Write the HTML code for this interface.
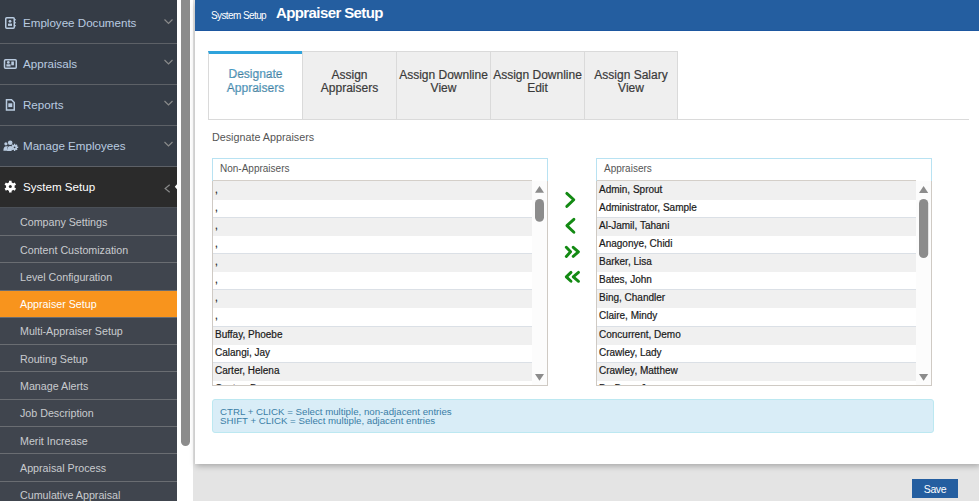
<!DOCTYPE html>
<html><head><meta charset="utf-8">
<style>
*{box-sizing:border-box;margin:0;padding:0}
html,body{width:979px;height:501px;overflow:hidden;background:#e4e4e4;font-family:"Liberation Sans",sans-serif}
#side{position:absolute;left:0;top:0;width:177px;height:501px;background:#353c46;overflow:hidden}
.top{position:absolute;left:0;width:177px;height:41px;border-bottom:1px solid #5d6167;color:#b9cbe0;font-size:11.6px}
.top .t{position:absolute;left:23px;top:13px;white-space:nowrap}
.top svg{position:absolute}
.chev{position:absolute;left:163px;top:19px}
.act{background:#2b2b2b;color:#fff}
.sub{position:absolute;left:0;width:177px;height:27.3px;border-bottom:1px solid #6a6d72;background:#40454e;color:#c9cbce;font-size:10.7px}
.sub .t{position:absolute;left:20px;top:7.5px;white-space:nowrap}
.sub.on{background:#f8941d;color:#fff}
#subbg{position:absolute;left:0;top:207px;width:177px;height:294px;background:#40454e;border-top:1px solid #4b5057}
#strip{position:absolute;left:177px;top:0;width:16px;height:501px;background:#fff}
#thumb{position:absolute;left:181px;top:-6px;width:9px;height:452px;background:#8c8c8c;border-radius:5px}
#panel{position:absolute;left:195px;top:0;width:786px;height:464px;background:#fff;box-shadow:0 3px 6px -1px rgba(0,0,0,.28)}
#hdr{position:absolute;left:0;top:0;width:786px;height:31px;background:#245ea0;border-bottom:1px solid #1d57a0;color:#fff}
#hdr .s{position:absolute;left:16px;top:10px;font-size:10px;letter-spacing:-0.6px;white-space:nowrap}
#hdr .b{position:absolute;left:81px;top:4px;font-size:15px;font-weight:bold;letter-spacing:-0.6px;white-space:nowrap}
.tab{position:absolute;top:51px;height:68px;background:#efefef;border:1px solid #dadada;border-bottom:none;color:#3a3a3a;-webkit-text-stroke:0.2px #3a3a3a;font-size:12px;text-align:center;line-height:14px}
.tab .t{position:absolute;left:0;right:0;top:17px;line-height:13px}
.tab.on{background:#fff;border-top:3px solid #2ea3dc;color:#56b4e4}
.tab.on .t{top:13px;line-height:14px}
#tabline{position:absolute;left:13px;top:119px;width:761px;height:1px;background:#dadada}
#h2{position:absolute;left:17px;top:131px;font-size:10.75px;color:#555;white-space:nowrap}
.box{position:absolute;top:158px;width:336px;height:228px;border:1px solid #cfcac4;background:#fff}
.box .hd{position:absolute;left:-1px;top:-1px;width:336px;height:23px;border:1px solid #b8e2f2;border-bottom:none;background:#fff;color:#555;font-size:10px}
.box .hd span{position:absolute;left:7px;top:4px}
.box .list{position:absolute;left:0;top:21px;width:319px;height:205px;overflow:hidden;border-top:1px solid #d4cfc9}
.row{height:18.15px;border-bottom:1px solid #dbe0e6;font-size:10px;color:#1a1a1a;-webkit-text-stroke:0.2px #1a1a1a;padding-left:2px;line-height:16px;white-space:nowrap}
.row:first-child{height:18.6px;padding-top:0.5px}
.row.g{background:#f0f0f0;border-bottom-color:#f0f0f0}
.sb{position:absolute;right:0;top:22px;width:15px;height:204px;background:#fcfcfc}
.info{position:absolute;left:17px;top:399px;width:722px;height:34px;background:#d9edf7;border:1px solid #bce8f1;border-radius:3px;color:#3a7ea6;font-size:9.7px;line-height:8.5px;padding:8px 0 0 7px}
#save{position:absolute;left:912px;top:479px;width:46px;height:19px;background:#245ea0;color:#fff;font-size:10.5px;letter-spacing:-0.4px;text-align:center;line-height:20px}
</style></head><body>
<div id="side">
  <div class="top" style="top:3px"><span class="t">Employee Documents</span></div>
  <div class="top" style="top:44px"><span class="t">Appraisals</span></div>
  <div class="top" style="top:85px"><span class="t">Reports</span></div>
  <div class="top" style="top:126px"><span class="t">Manage Employees</span></div>
  <div class="top act" style="top:167px;border-bottom:none;height:40px"><span class="t" style="top:13px">System Setup</span></div>
  <div id="subbg"></div>
  <div class="sub" style="top:208.7px"><span class="t">Company Settings</span></div>
  <div class="sub" style="top:236.0px"><span class="t">Content Customization</span></div>
  <div class="sub" style="top:263.3px"><span class="t">Level Configuration</span></div>
  <div class="sub on" style="top:290.6px"><span class="t">Appraiser Setup</span></div>
  <div class="sub" style="top:317.9px"><span class="t">Multi-Appraiser Setup</span></div>
  <div class="sub" style="top:345.2px"><span class="t">Routing Setup</span></div>
  <div class="sub" style="top:372.5px"><span class="t">Manage Alerts</span></div>
  <div class="sub" style="top:399.8px"><span class="t">Job Description</span></div>
  <div class="sub" style="top:427.1px"><span class="t">Merit Increase</span></div>
  <div class="sub" style="top:454.4px"><span class="t">Appraisal Process</span></div>
  <div class="sub" style="top:481.7px"><span class="t">Cumulative Appraisal</span></div>
</div>
<div id="strip"></div>
<div id="thumb"></div>
<div id="panel">
  <div id="hdr"><span class="s">System Setup</span><span class="b">Appraiser Setup</span></div>
  <div class="tab on" style="left:13px;width:95px"><div class="t">Designate<br>Appraisers</div></div>
  <div class="tab" style="left:107px;width:95px"><div class="t">Assign<br>Appraisers</div></div>
  <div class="tab" style="left:201px;width:95px"><div class="t">Assign Downline<br>View</div></div>
  <div class="tab" style="left:295px;width:95px"><div class="t">Assign Downline<br>Edit</div></div>
  <div class="tab" style="left:389px;width:94px"><div class="t">Assign Salary<br>View</div></div>
  <div id="tabline"></div>
  <div id="h2">Designate Appraisers</div>
  <div class="box" style="left:17px"><div class="hd"><span>Non-Appraisers</span></div>
    <div class="list">
      <div class="row g">,</div><div class="row">,</div><div class="row g">,</div><div class="row">,</div>
      <div class="row g">,</div><div class="row">,</div><div class="row g">,</div><div class="row">,</div>
      <div class="row g">Buffay, Phoebe</div><div class="row">Calangi, Jay</div><div class="row g">Carter, Helena</div><div class="row">Castro, Bruce</div>
    </div>
    <div class="sb"></div>
  </div>
  <div class="box" style="left:401px"><div class="hd"><span>Appraisers</span></div>
    <div class="list">
      <div class="row g">Admin, Sprout</div><div class="row">Administrator, Sample</div><div class="row g">Al-Jamil, Tahani</div><div class="row">Anagonye, Chidi</div>
      <div class="row g">Barker, Lisa</div><div class="row">Bates, John</div><div class="row g">Bing, Chandler</div><div class="row">Claire, Mindy</div>
      <div class="row g">Concurrent, Demo</div><div class="row">Crawley, Lady</div><div class="row g">Crawley, Matthew</div><div class="row">De Boer, Jan</div>
    </div>
    <div class="sb"></div>
  </div>
  <div class="info">CTRL + CLICK = Select multiple, non-adjacent entries<br>SHIFT + CLICK = Select multiple, adjacent entries</div>
</div>
<div id="save">Save</div>
<svg id="ov" width="979" height="501" viewBox="0 0 979 501" style="position:absolute;left:0;top:0;pointer-events:none">
<g fill="none" stroke="#b9cbe0" stroke-width="1.5">
<rect x="5.75" y="17.75" width="8.5" height="10.5" rx="1"/>
<rect x="4.5" y="59.75" width="11.75" height="8.5" rx="1"/>
<path d="M6.5 99.75 H11.5 L14.25 102.5 V110 H6.5Z"/>
</g>
<g fill="#b9cbe0">
<rect x="14.5" y="19" width="1.2" height="1.4"/><rect x="14.5" y="22" width="1.2" height="1.4"/><rect x="14.5" y="25" width="1.2" height="1.4"/>
<circle cx="10" cy="21.3" r="1.4"/><rect x="8" y="23.6" width="4" height="2.3"/>
<circle cx="8.3" cy="62.4" r="1.4"/><rect x="6.4" y="64.3" width="4.2" height="2.2"/><rect x="11.3" y="61.5" width="2.6" height="3.8"/>
<rect x="8.3" y="103.3" width="4" height="3.8"/>
<circle cx="5.9" cy="143.8" r="1.6"/><circle cx="10.2" cy="142.8" r="2.3"/>
<path d="M3.4 150.8 Q3.4 146.3 6.2 146.3 L8 146.3 Q6.5 148 7 150.8Z"/><path d="M7 151 Q7 146 10.4 146 Q12 146 12.5 147.5 L11.5 151Z"/>
</g>
<g transform="translate(14.6 147.3)"><circle r="2.6" fill="#b9cbe0"/><path d="M0 -3.6 V3.6 M-3.6 0 H3.6 M-2.5 -2.5 L2.5 2.5 M2.5 -2.5 L-2.5 2.5" stroke="#b9cbe0" stroke-width="1.4"/><circle r="0.9" fill="#353c46"/></g>
<g transform="translate(10.3 186.6)"><circle r="4.3" fill="#fff"/><path d="M0 -5.9 V5.9 M-5.1 -2.95 L5.1 2.95 M5.1 -2.95 L-5.1 2.95" stroke="#fff" stroke-width="2.6"/><circle r="1.5" fill="#2b2b2b"/></g>
<g fill="none" stroke="#8a8b8b" stroke-width="1.15">
<path d="M164.5 19.5 L168.5 23.5 L172.5 19.5"/>
<path d="M164.5 60 L168.5 64 L172.5 60"/>
<path d="M164.5 101 L168.5 105 L172.5 101"/>
<path d="M164.5 142 L168.5 146 L172.5 142"/>
<path d="M169.7 184.7 L165.1 188.5 L169.7 192.3"/>
</g>
<path d="M174.8 186.7 L177.2 183.9 L177.2 189.5Z" fill="#fff"/>
<g fill="none" stroke="#138a13" stroke-width="2.9" stroke-linecap="round" stroke-linejoin="round">
<path d="M566.8 193.4 L573.8 199.8 L566.8 206.4"/>
<path d="M573.9 219.3 L566.9 225.6 L573.9 232.2"/>
<path d="M566.3 247.3 L570.6 251.8 L566.3 256.4 M573.2 247.3 L578.4 251.8 L573.2 256.4"/>
<path d="M571 272.4 L566.3 276.9 L571 281.3 M578.5 272.4 L573.2 276.9 L578.5 281.3"/>
</g>
<g fill="#8c8c8c">
<path d="M535 192.7 L539.5 186 L544 192.7Z"/>
<rect x="535" y="199" width="9" height="22.7" rx="4.5"/>
<path d="M535 374 L539.5 380.8 L544 374Z"/>
<path d="M919 192.9 L923.6 186.1 L928.2 192.9Z"/>
<rect x="919" y="199" width="9.2" height="59" rx="4.6"/>
<path d="M919 374 L923.6 380.8 L928.2 374Z"/>
</g>
</svg>
</body></html>
